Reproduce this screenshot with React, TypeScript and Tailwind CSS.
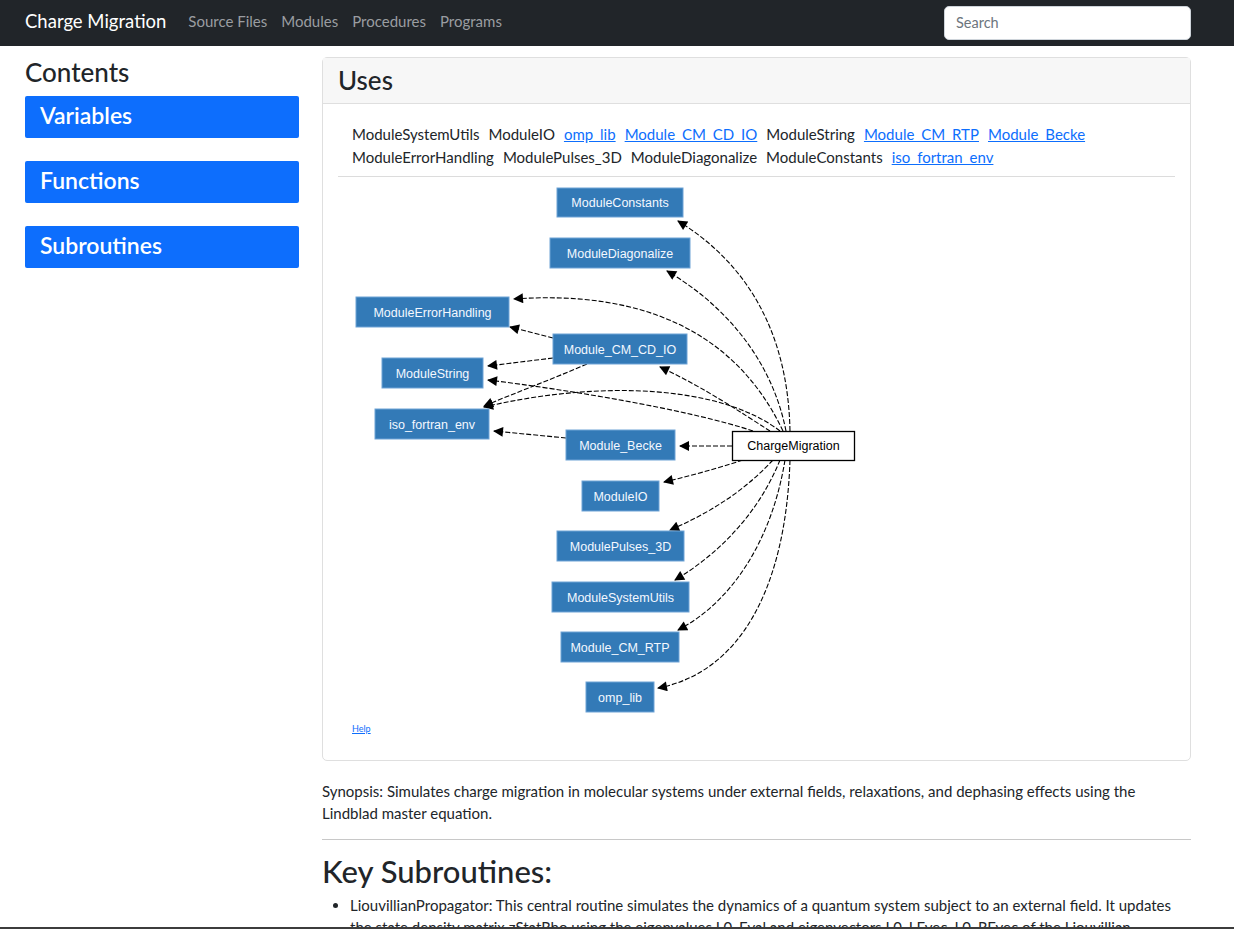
import React from 'react';

const font = { fontFamily: 'Lato, "Noto Sans", sans-serif' };

const usesList: { name: string; link?: boolean }[] = [
  { name: 'ModuleSystemUtils' },
  { name: 'ModuleIO' },
  { name: 'omp_lib', link: true },
  { name: 'Module_CM_CD_IO', link: true },
  { name: 'ModuleString' },
  { name: 'Module_CM_RTP', link: true },
  { name: 'Module_Becke', link: true },
  { name: 'ModuleErrorHandling' },
  { name: 'ModulePulses_3D' },
  { name: 'ModuleDiagonalize' },
  { name: 'ModuleConstants' },
  { name: 'iso_fortran_env', link: true },
];

// graph nodes in page coordinates (svg viewBox maps 1:1)
const nodes = [
  { label: 'ModuleConstants', x: 557, y: 188, w: 126, h: 29 },
  { label: 'ModuleDiagonalize', x: 550, y: 238, w: 140, h: 30 },
  { label: 'ModuleErrorHandling', x: 356, y: 297, w: 153, h: 30 },
  { label: 'Module_CM_CD_IO', x: 553, y: 334, w: 134, h: 30 },
  { label: 'ModuleString', x: 382, y: 358, w: 101, h: 30 },
  { label: 'iso_fortran_env', x: 375, y: 409, w: 114, h: 30 },
  { label: 'Module_Becke', x: 566, y: 430, w: 109, h: 30 },
  { label: 'ModuleIO', x: 582, y: 481, w: 77, h: 30 },
  { label: 'ModulePulses_3D', x: 557, y: 531, w: 127, h: 30 },
  { label: 'ModuleSystemUtils', x: 552, y: 582, w: 137, h: 30 },
  { label: 'Module_CM_RTP', x: 561, y: 632, w: 118, h: 30 },
  { label: 'omp_lib', x: 586, y: 682, w: 68, h: 30 },
];

const edges = [
  'M790,431 C788,330 745,262 678,221',
  'M786,431 C772,360 725,305 667,271',
  'M783,431 C735,330 640,290 514,299',
  'M770,431 C740,412 705,388 660,367',
  'M753,431 C690,410 570,390 488,380',
  'M780,431 C720,385 600,380 484,407',
  'M732,446 L680,446',
  'M553,338 L510,327',
  'M553,358 L488,366',
  'M587,364 C550,380 515,393 484,406',
  'M566,438 L494,431',
  'M743,460 C715,469 690,476 664,482',
  'M773,460 C745,490 712,512 670,530',
  'M780,460 C760,510 722,552 675,580',
  'M785,460 C772,540 732,602 678,630',
  'M790,460 C786,585 742,672 658,688',
];

function Graph() {
  return (
    <svg width="837" height="540" viewBox="338 180 837 540" className="block">
      <defs>
        <marker
          id="arrow"
          viewBox="0 0 10 10"
          refX="9"
          refY="5"
          markerWidth="14"
          markerHeight="10"
          markerUnits="userSpaceOnUse"
          orient="auto"
        >
          <path d="M0,0 L10,5 L0,10 z" fill="#000" />
        </marker>
      </defs>
      {edges.map((d, i) => (
        <path key={i} d={d} fill="none" stroke="#000" strokeWidth="1.1" strokeDasharray="5,2" markerEnd="url(#arrow)" />
      ))}
      {nodes.map((n) => (
        <g key={n.label}>
          <rect x={n.x} y={n.y} width={n.w} height={n.h} fill="#337ab7" stroke="#6fa3d6" strokeWidth="1" />
          <text
            x={n.x + n.w / 2}
            y={n.y + n.h / 2 + 4.5}
            textAnchor="middle"
            fontFamily='"Liberation Sans", Arial, sans-serif'
            fontSize="12.5"
            fill="#f4f8ff"
          >
            {n.label}
          </text>
        </g>
      ))}
      <rect x="732.5" y="431.5" width="122" height="29" fill="#fff" stroke="#000" strokeWidth="1.3" />
      <text
        x="793.5"
        y="450"
        textAnchor="middle"
        fontFamily='"Liberation Sans", Arial, sans-serif'
        fontSize="12.5"
        fill="#000"
      >
        ChargeMigration
      </text>
    </svg>
  );
}

export default function App() {
  return (
    <div className="min-h-screen bg-white text-[#212529]" style={font}>
      <nav className="flex h-[46px] items-center bg-[#212529] pb-[3px] pl-[25px] pr-[43px]">
        <span className="text-[18.5px] text-white">Charge Migration</span>
        <div className="ml-[22px] flex gap-[14px] text-[15px] text-[#9a9da1]">
          <span>Source Files</span>
          <span>Modules</span>
          <span>Procedures</span>
          <span>Programs</span>
        </div>
        <input
          placeholder="Search"
          className="ml-auto mt-[2px] h-[34px] w-[247px] rounded-[5px] border border-[#ced4da] bg-white px-[11px] text-[14.5px] placeholder:text-[#6c757d]"
        />
      </nav>

      <div className="flex gap-[23px] pl-[25px]">
        <aside className="w-[274px] shrink-0 pt-[12px]">
          <h3 className="text-[26px] font-medium leading-[28px]">Contents</h3>
          <div className="mt-[10px] flex flex-col gap-[23px]">
            {['Variables', 'Functions', 'Subroutines'].map((s) => (
              <div
                key={s}
                className="flex h-[42px] items-center rounded-[2px] bg-[#0d6efd] pb-[4px] pl-[15px] text-[23px] font-semibold text-white"
              >
                {s}
              </div>
            ))}
          </div>
        </aside>

        <main className="w-[869px] pt-[11px]">
          <div className="rounded-[5px] border border-[#dfdfdf]">
            <div className="flex h-[46px] items-center border-b border-[#dfdfdf] bg-[#f7f7f7] px-[15px]">
              <h2 className="text-[26px] font-medium">Uses</h2>
            </div>
            <div className="px-[15px] pb-[24px]">
              <div className="flex flex-wrap gap-x-[9px] px-[14px] pt-[19px] text-[15px] leading-[23px]">
                {usesList.map((u) =>
                  u.link ? (
                    <a key={u.name} className="text-[#0d6efd] underline">
                      {u.name}
                    </a>
                  ) : (
                    <span key={u.name}>{u.name}</span>
                  ),
                )}
              </div>
              <hr className="mt-[7px] border-[#dcdcdc]" />
              <div className="mt-[3px]">
                <Graph />
              </div>
              <a className="ml-[14px] mt-[2px] block text-[9px] text-[#0d6efd] underline">Help</a>
            </div>
          </div>

          <p className="mt-[19px] text-[15px] leading-[22px]">
            Synopsis: Simulates charge migration in molecular systems under external fields, relaxations, and dephasing
            effects using the Lindblad master equation.
          </p>
          <hr className="mt-[15px] border-[#c8c8c8]" />
          <h2 className="mt-[13px] text-[31px] font-medium leading-[36px]">Key Subroutines:</h2>
          <ul className="mt-[5px] list-disc pl-[28px] text-[15px] leading-[22px]">
            <li>
              LiouvillianPropagator: This central routine simulates the dynamics of a quantum system subject to an external
              field. It updates the state density matrix zStatRho using the eigenvalues L0_Eval and eigenvectors L0_LEvec,
              L0_REvec of the Liouvillian operator.
            </li>
          </ul>
        </main>
      </div>
      <div className="fixed bottom-0 left-0 right-0 h-[2px] bg-[#3c3c3c]" />
    </div>
  );
}
